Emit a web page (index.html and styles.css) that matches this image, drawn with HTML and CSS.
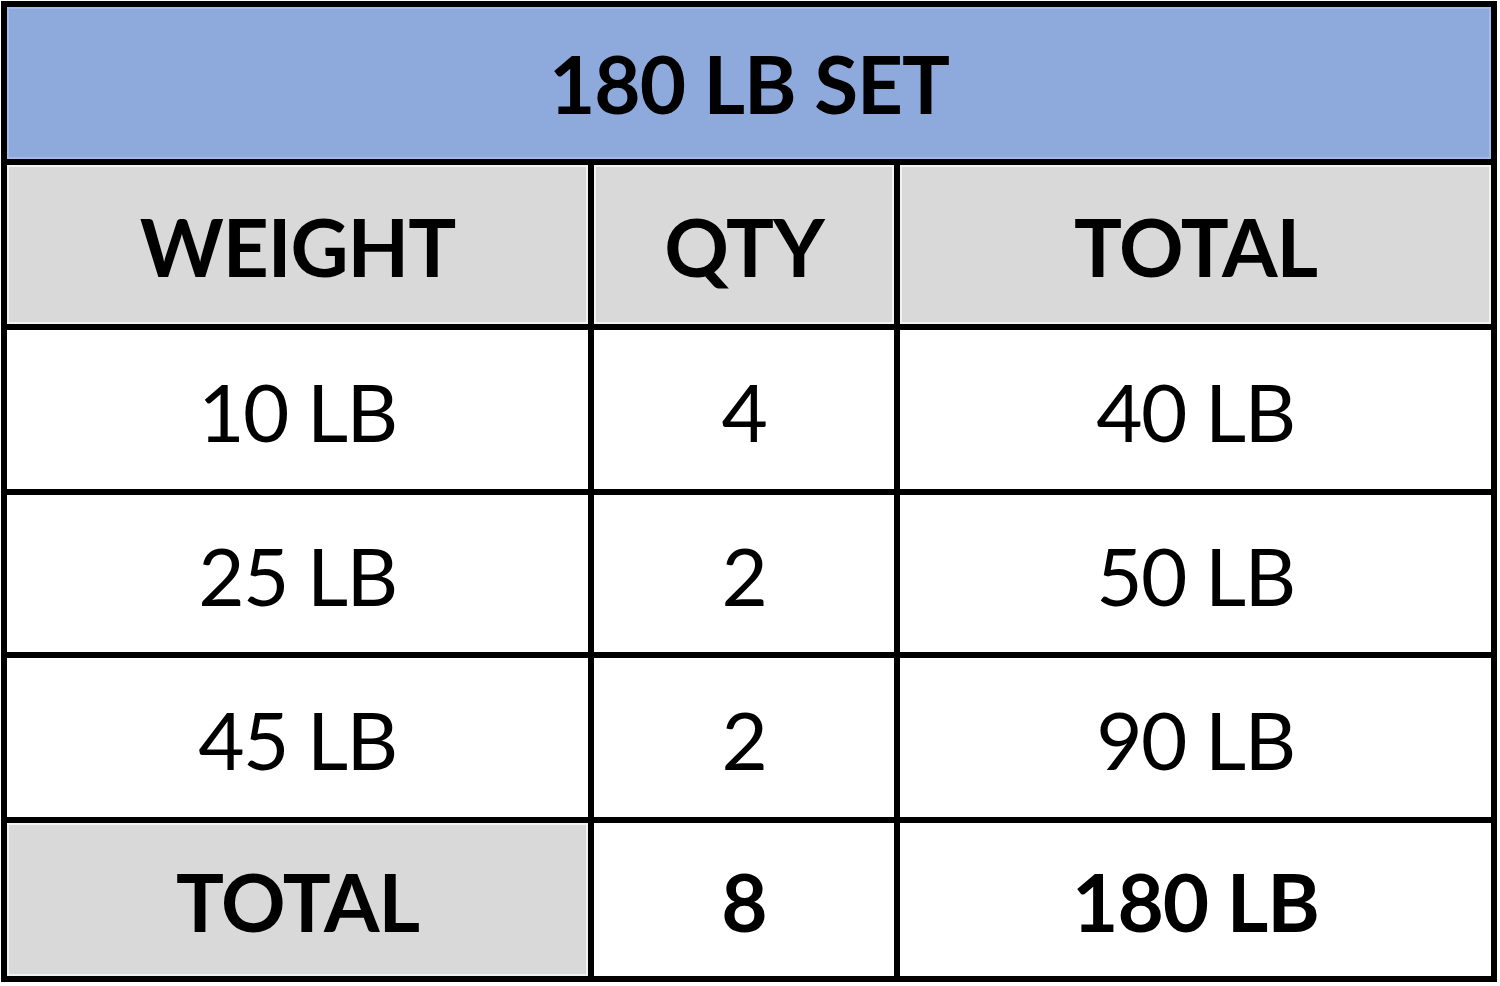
FILE: index.html
```html
<!DOCTYPE html>
<html lang="en">
<head>
<meta charset="utf-8">
<title>180 LB SET</title>
<link rel="stylesheet" href="styles.css">
</head>
<body>
<div class="sheet" role="table">
  <div class="cell title bold" role="row">180 LB SET</div>
  <div class="cell head bold">WEIGHT</div>
  <div class="cell head bold">QTY</div>
  <div class="cell head bold">TOTAL</div>
  <div class="cell">10 LB</div>
  <div class="cell">4</div>
  <div class="cell">40 LB</div>
  <div class="cell">25 LB</div>
  <div class="cell">2</div>
  <div class="cell">50 LB</div>
  <div class="cell">45 LB</div>
  <div class="cell">2</div>
  <div class="cell">90 LB</div>
  <div class="cell head bold">TOTAL</div>
  <div class="cell bold">8</div>
  <div class="cell bold">180 LB</div>
</div>
</body>
</html>
```
FILE: styles.css
```css
html, body {
  margin: 0;
  padding: 0;
  background: #ffffff;
}
body {
  width: 1500px;
  height: 986px;
  overflow: hidden;
  font-family: "Lato", "Open Sans", "DejaVu Sans", sans-serif;
  color: #000;
}
.sheet {
  margin: 1px 0 0 1px;
  width: 1496px;
  height: 981px;
  box-sizing: border-box;
  padding: 6px;
  background: #000;
  display: grid;
  grid-template-columns: 581px 300px 591px;
  grid-template-rows: 152px 159px 159px 157px 159px 153px;
  gap: 6px;
}
.cell {
  background: #fff;
  display: flex;
  align-items: center;
  justify-content: center;
  font-size: 80px;
  font-weight: 400;
  letter-spacing: -1.5px;
  line-height: 1;
  padding-top: 3px;
  box-sizing: border-box;
}
.bold {
  font-weight: 700;
  letter-spacing: -1px;
}
.title {
  grid-column: 1 / 4;
  background: #8eaadc;
  box-shadow: inset 0 0 0 2px #a3bbe6;
  padding-top: 0;
}
.head {
  background: #d9d9d9;
  box-shadow: inset 0 0 0 2px #f2f2f2;
}
```
